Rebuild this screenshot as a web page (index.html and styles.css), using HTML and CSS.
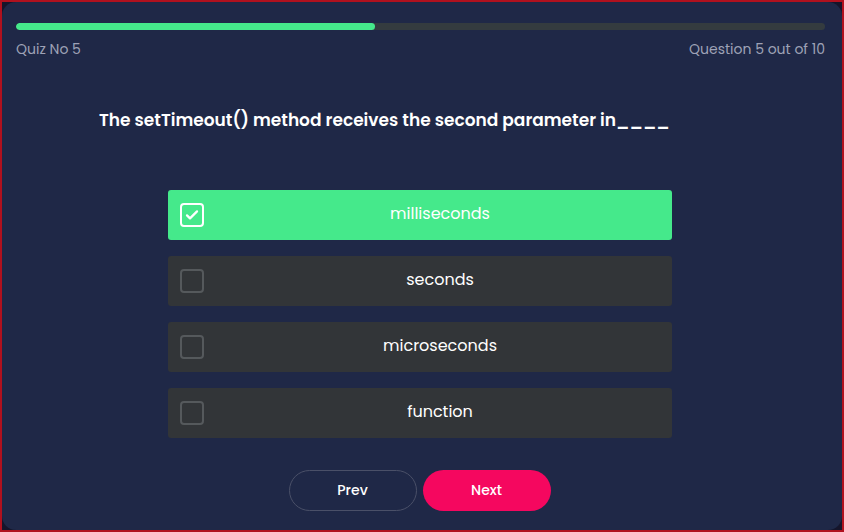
FILE: index.html
```html
<!DOCTYPE html>
<html lang="en">
<head>
  <meta charset="UTF-8">
  <title>Quiz</title>
  <meta name="viewport" content="width=device-width, initial-scale=1.0">
  <link rel="stylesheet" href="styles.css">
</head>
<body>
  <div class="card">
    <div class="progress"><div class="progress-fill" style="width: 44.4%"></div></div>
    <div class="meta">
      <span>Quiz No 5</span>
      <span>Question 5 out of 10</span>
    </div>

    <h2 class="question">The setTimeout() method receives the second parameter in____</h2>

    <div class="options">
      <div class="option selected">
        <span class="box">
          <svg viewBox="0 0 24 24" width="16" height="16"><path d="M4.5 12.5l4.5 4.5L19.5 6.5" fill="none" stroke="#fff" stroke-width="3.4" stroke-linecap="round" stroke-linejoin="round"/></svg>
        </span>
        <span class="label">milliseconds</span>
      </div>
      <div class="option"><span class="box"></span><span class="label">seconds</span></div>
      <div class="option"><span class="box"></span><span class="label">microseconds</span></div>
      <div class="option"><span class="box"></span><span class="label">function</span></div>
    </div>

    <div class="btns">
      <button class="btn prev">Prev</button>
      <button class="btn next">Next</button>
    </div>
  </div>
</body>
</html>
```

FILE: styles.css
```css
* { box-sizing: border-box; }
html, body { height: 100%; }
body { margin: 0; border: 2px solid #b0111e; background: #15152b; font-family: Poppins, Inter, "Noto Sans", sans-serif; color: #fff; }

.card { height: 100%; background: #1f2847; border-radius: 14px; padding: 21px 17px 0 14px; }

.progress { height: 7px; background: #343b3f; border-radius: 4px; overflow: hidden; }
.progress-fill { height: 100%; background: #45e98b; border-radius: 4px; }

.meta { display: flex; justify-content: space-between; margin-top: 10px; font-size: 14px; line-height: 18px; color: #9ea2b6; }

.question { margin: 50px 0 0 83px; font-size: 17px; line-height: 24px; font-weight: 600; }

.options { width: 504px; margin: 58px 0 0 152px; display: flex; flex-direction: column; gap: 16px; }
.option { height: 50px; background: #323538; border-radius: 3px; display: flex; align-items: center; padding-left: 12px; }
.option.selected { background: #45e98b; }
.box { width: 24px; height: 24px; border: 2px solid #55595c; border-radius: 4px; display: flex; align-items: center; justify-content: center; margin-right: 4px; }
.selected .box { border-color: #fff; }
.label { flex: 1; text-align: center; font-size: 16px; font-weight: 400; padding-bottom: 4px; }

.btns { display: flex; justify-content: center; gap: 6px; margin-top: 32px; padding-right: 2px; }
.btn { width: 128px; height: 41px; border-radius: 21px; font-family: inherit; font-size: 14px; font-weight: 500; color: #fff; cursor: pointer; }
.prev { background: transparent; border: 1px solid #4a5068; }
.next { background: #f5075f; border: none; }
```
